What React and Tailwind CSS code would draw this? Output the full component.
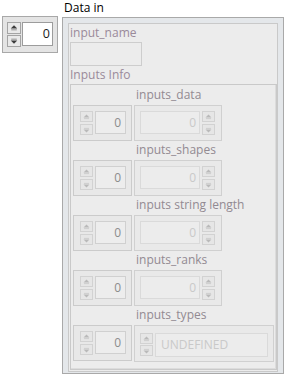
import React from "react";

function Arrow({ dir, dim }) {
  const tri = dim ? "#b9b9b9" : "#3a3a3a";
  const bar = dim ? "#c9c9c9" : "#8a8a8a";
  return (
    <svg width="13" height="10" viewBox="0 0 13 10">
      {dir === "up" ? (
        <>
          <polygon points="3,5.5 10,5.5 6.5,2" fill={tri} />
          <rect x="3.5" y="6.5" width="6" height="1" fill={bar} />
        </>
      ) : (
        <>
          <rect x="3.5" y="2.5" width="6" height="1" fill={bar} />
          <polygon points="3,4.5 10,4.5 6.5,8" fill={tri} />
        </>
      )}
    </svg>
  );
}

function Spin({ dim, w = "w-[13px]", h = "h-[11px]", gap = "gap-[2px]" }) {
  const btn = dim
    ? "border-[#d2d2d2] bg-[#e6e6e6]"
    : "border-[#a4a4a4] bg-[#e9e9e9]";
  return (
    <div className={`flex flex-col ${gap}`}>
      <div className={`${w} ${h} border ${btn} flex items-center justify-center`}>
        <Arrow dir="up" dim={dim} />
      </div>
      <div className={`${w} ${h} border ${btn} flex items-center justify-center`}>
        <Arrow dir="down" dim={dim} />
      </div>
    </div>
  );
}

function NumCtl() {
  return (
    <div className="w-[59px] h-[36px] border border-[#cbcbcb] bg-[#e8e8e8] flex items-start pl-[6px] pt-[5px]">
      <Spin dim />
      <div className="ml-[2px] w-[31px] h-[23px] border border-[#d0d0d0] bg-[#ededed] text-right pr-[4px] text-[12px] leading-[21px] text-[#8c8c8c]">
        0
      </div>
    </div>
  );
}

function ArrCtl() {
  return (
    <div className="w-[88px] h-[36px] border border-[#d0d0d0] bg-[#e9e9e9] flex items-start pl-[5px] pt-[5px]">
      <div className="w-[60px] h-[23px] border border-[#dadada] bg-[#ececec] text-right pr-[3px] text-[12px] leading-[21px] text-[#c9c9c9]">
        0
      </div>
      <div className="ml-[2px]">
        <Spin dim w="w-[13px]" />
      </div>
    </div>
  );
}

function EnumArr() {
  return (
    <div className="w-[140px] h-[37px] border border-[#d0d0d0] bg-[#e9e9e9] flex items-start pl-[5px] pt-[7px]">
      <Spin dim w="w-[13px]" gap="gap-[1px]" />
      <div className="ml-[2px] w-[113px] h-[24px] border border-[#dadada] bg-[#ececec] pl-[5px] text-[12px] leading-[22px] text-[#c9c9c9]">
        UNDEFINED
      </div>
    </div>
  );
}

const rows = [
  { label: "inputs_data" },
  { label: "inputs_shapes" },
  { label: "inputs string length" },
  { label: "inputs_ranks" },
  { label: "inputs_types", en: true },
];

export default function App() {
  return (
    <div
      className="w-[284px] h-[375px] bg-white flex items-start pl-[2px] pt-[2px]"
      style={{ fontFamily: '"Open Sans", "Noto Sans", sans-serif' }}
    >
      <div className="mt-[14px] w-[56px] h-[37px] border border-[#a8a8a8] bg-[#e4e4e4] flex items-start pl-[4px] pt-[5px]">
        <Spin w="w-[14px]" h="h-[12px]" gap="gap-[1px]" />
        <div className="ml-[1px] w-[31px] h-[24px] border border-[#9c9c9c] bg-white text-right pr-[2px] text-[12.5px] leading-[22px] text-[#1a1a1a]">
          0
        </div>
      </div>

      <div className="ml-[4px] flex flex-col">
        <div className="h-[15px] pl-[2px] text-[12px] leading-[12px] text-black">
          Data in
        </div>
        <div className="w-[222px] h-[357px] border border-[#a9a9a9] bg-[#e4e7ea] px-[5px] pt-[5px] pb-[1px]">
          <div className="h-full border border-[#c9c9c9] bg-[#ececec] pl-[1px] flex flex-col">
            <div className="mt-[1px] text-[12px] leading-[16px] text-[#9a8a9a]">
              input_name
            </div>
            <div className="mt-[1px] w-[72px] h-[24px] border border-[#cdcdcd] bg-[#ececec]" />
            <div className="mt-[1px] text-[12px] leading-[16px] text-[#9a8a9a]">
              Inputs Info
            </div>
            <div className="mt-[1px] w-[207px] h-[286px] border border-[#c9c9c9] shadow-[inset_-1px_-1px_0_#dcdcdc] pl-[2px] pt-[2px] flex flex-col gap-[1px]">
              {rows.map((r) => (
                <div key={r.label} className="flex flex-col">
                  <div className="pl-[63px] text-[12px] leading-[16px] text-[#928a92]">
                    {r.label}
                  </div>
                  <div className="mt-[2px] flex items-start gap-[2px]">
                    <NumCtl />
                    {r.en ? <EnumArr /> : <ArrCtl />}
                  </div>
                </div>
              ))}
            </div>
          </div>
        </div>
      </div>
    </div>
  );
}
